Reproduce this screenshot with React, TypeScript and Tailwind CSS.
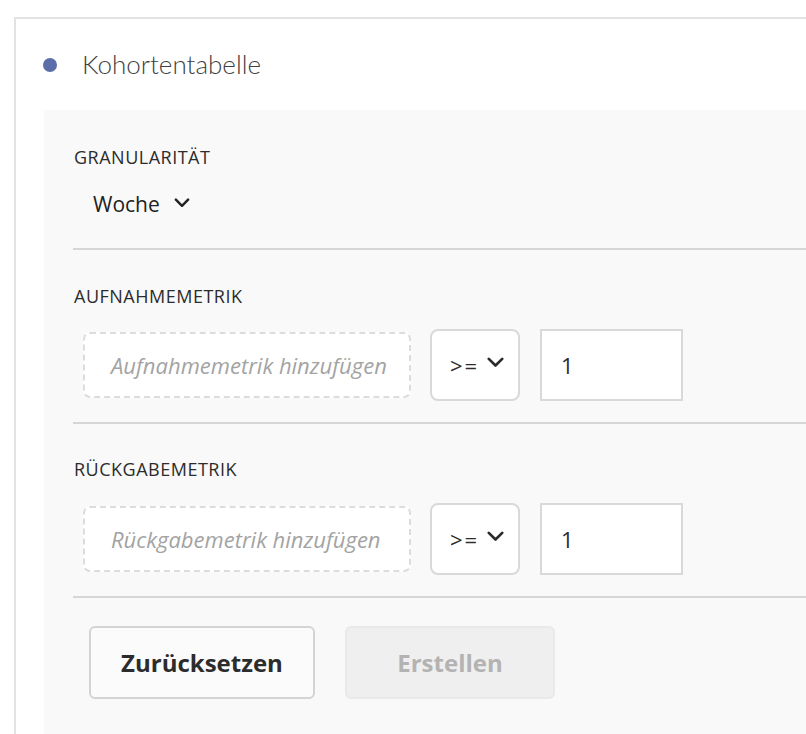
import type { ReactNode } from "react";

const font = { fontFamily: '"Open Sans", "Noto Sans", sans-serif' };
const titleFont = { fontFamily: '"Lato", "Open Sans", sans-serif' };

function Chevron({ className }: { className?: string }) {
	return (
		<svg className={className} viewBox="0 0 14 9" fill="none">
			<path
				d="M1.5 1.5 L7 7 L12.5 1.5"
				stroke="currentColor"
				strokeWidth="2.2"
				strokeLinecap="round"
				strokeLinejoin="round"
			/>
		</svg>
	);
}

function SectionLabel({ children }: { children: ReactNode }) {
	return (
		<div className="h-[20px] text-[18px] font-medium leading-[20px] tracking-[0.5px] text-[#2c2c2c]">
			{children}
		</div>
	);
}

function Divider({ className }: { className?: string }) {
	return <div className={`-ml-px h-[2px] bg-[#d6d6d6] ${className ?? ""}`} />;
}

function MetricRow({ placeholder }: { placeholder: string }) {
	return (
		<div className="flex h-[72px] items-center">
			<div className="ml-[9px] flex h-[66px] w-[328px] items-center rounded-[7px] border-2 border-dashed border-[#dcdcdc] bg-white pl-[26px]">
				<span className="text-[22px] italic text-[#a3a3a3]">{placeholder}</span>
			</div>
			<div className="ml-[19px] flex h-[72px] w-[90px] items-center rounded-[8px] border-2 border-[#d9d9d9] bg-white pl-[18px] text-[#2c2c2c]">
				<span className="text-[22px] tracking-[2px]">&gt;=</span>
				<Chevron className="ml-[7px] h-[11px] w-[19px] -translate-y-[3px]" />
			</div>
			<div className="ml-[20px] flex h-[72px] w-[143px] items-center border-2 border-[#d9d9d9] bg-white pl-[19px] text-[22px] text-[#2c2c2c]">
				1
			</div>
		</div>
	);
}

export default function App() {
	return (
		<div
			className="h-[734px] w-full overflow-hidden bg-white pl-[14px] pt-[17px]"
			style={font}
		>
			<div className="flex h-full flex-col border-l-2 border-t-2 border-[#e3e3e3]">
				<div className="flex h-[91px] items-center pl-[27px]">
					<span className="h-[14px] w-[14px] rounded-full bg-[#5b6ea9]" />
					<span
						className="ml-[25px] text-[26px] font-light text-[#3f3f3f]"
						style={titleFont}
					>
						Kohortentabelle
					</span>
				</div>

				<div className="ml-[28px] flex-1 bg-[#f9f9f9] pl-[30px] pt-[37px]">
					<SectionLabel>GRANULARITÄT</SectionLabel>
					<div className="ml-[19px] mt-[23px] flex h-[30px] items-center text-[#222]">
						<span className="text-[21px]">Woche</span>
						<Chevron className="ml-[14px] h-[10px] w-[16px] -translate-y-[2px]" />
					</div>
					<Divider className="mt-[28px]" />

					<div className="mt-[36px]">
						<SectionLabel>AUFNAHMEMETRIK</SectionLabel>
					</div>
					<div className="mt-[23px]">
						<MetricRow placeholder="Aufnahmemetrik hinzufügen" />
					</div>
					<Divider className="mt-[21px]" />

					<div className="mt-[35px]">
						<SectionLabel>RÜCKGABEMETRIK</SectionLabel>
					</div>
					<div className="mt-[24px]">
						<MetricRow placeholder="Rückgabemetrik hinzufügen" />
					</div>
					<Divider className="mt-[21px]" />

					<div className="mt-[28px] flex">
						<button
							type="button"
							className="ml-[15px] h-[73px] w-[226px] rounded-[6px] border-2 border-[#d4d4d4] bg-[#fbfbfb] text-[24px] font-bold text-[#2c2c2c]"
						>
							Zurücksetzen
						</button>
						<button
							type="button"
							className="ml-[30px] h-[73px] w-[210px] rounded-[6px] border-2 border-[#e9e9e9] bg-[#efefef] text-[24px] font-bold text-[#b3b3b3]"
						>
							Erstellen
						</button>
					</div>
				</div>
			</div>
		</div>
	);
}
